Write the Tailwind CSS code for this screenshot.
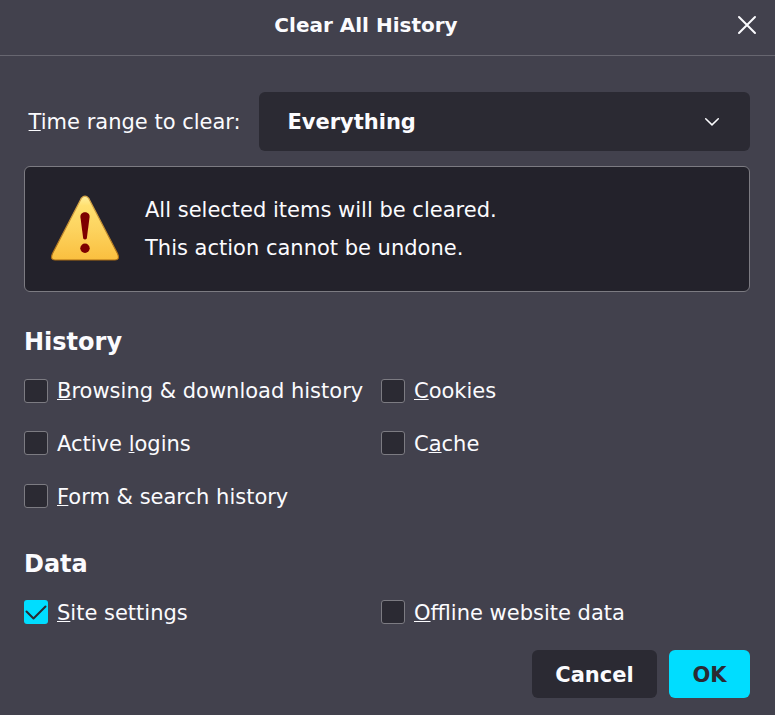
<!DOCTYPE html>
<html lang="en">
<head>
<meta charset="utf-8">
<title>Clear All History</title>
<script src="https://cdn.jsdelivr.net/npm/@tailwindcss/browser@4"></script>
</head>
<body class="flex h-[715px] w-[775px] flex-col overflow-hidden bg-[#42414d] font-['DejaVu_Sans',sans-serif] text-[21px] leading-[26px] whitespace-nowrap text-[#fbfbfe]">
<header class="grid h-14 shrink-0 grid-cols-[43px_1fr_43px] items-center border-b border-[#676670] pb-1">
  <h1 class="col-start-2 -ml-[43px] pb-[2px] text-center text-[20px] font-bold">Clear All History</h1>
  <svg class="mt-[-1px] ml-[5px] size-5" viewBox="0 0 20 20" fill="none" stroke="#fbfbfe" stroke-width="2" stroke-linecap="round"><path d="M2 2 18 18M18 2 2 18"/></svg>
</header>
<main class="flex flex-col px-6 pt-9">
  <div class="flex h-[59px] items-center">
    <label class="w-[235px] pl-[4.6px]"><u class="decoration-1 underline-offset-1">T</u>ime range to clear:</label>
    <div class="flex h-full w-[491px] items-center justify-between rounded-[6px] bg-[#2b2a33] pr-[30px] pl-[28.4px] font-bold">
      <span>Everything</span>
      <svg class="h-4 w-4" viewBox="0 0 16 16" fill="none" stroke="#fbfbfe" stroke-width="1.5" stroke-linecap="round" stroke-linejoin="round"><path d="m1.7 4.7 6.3 6.2L14.3 4.7"/></svg>
    </div>
  </div>
  <div class="mt-[15px] flex h-[126px] w-[726px] items-center rounded-[6px] border border-[#7c7b82] bg-[#23222b] pl-[25px]">
    <svg class="h-[68px] w-[70px]" viewBox="0 0 70 68">
      <defs>
        <linearGradient id="amber" x1="0" y1="0" x2="0" y2="1"><stop offset="0" stop-color="#fff0a0"/><stop offset=".15" stop-color="#ffe070"/><stop offset=".5" stop-color="#fdd460"/><stop offset="1" stop-color="#fabf3f"/></linearGradient>
        <linearGradient id="edge" x1="0" y1="0" x2="0" y2="1"><stop offset="0" stop-color="#d9a94a"/><stop offset="1" stop-color="#a86a12"/></linearGradient>
      </defs>
      <path d="M31.4 3.2Q35-.8 38.6 3.2L67.5 58.5Q70.3 65 65 65H5Q-.3 65 2.5 58.5Z" fill="url(#amber)" stroke="url(#edge)" stroke-width="1.2"/>
      <path d="M30.4 22C30 15.700 40 15.700 39.600 22L36.800 43.500Q35 45.500 33.200 43.500Z" fill="#7d0000"/>
      <circle cx="35" cy="53.3" r="4.7" fill="#7d0000"/>
    </svg>
    <div class="ml-[25px] leading-[38px]"><p>All selected items will be cleared.</p><p>This action cannot be undone.</p></div>
  </div>
  <section class="mt-[34px]">
    <h2 class="h-8 text-[24px] leading-8 font-bold">History</h2>
    <div class="mt-[21px] grid grid-cols-[357px_1fr] grid-rows-[52px_53px_24px]">
      <label class="flex h-6 items-center gap-[9px]"><span class="size-6 rounded-[3px] border border-[#7c7b82] bg-[#2b2a33]"></span><span><u class="decoration-1 underline-offset-1">B</u>rowsing &amp; download history</span></label>
      <label class="flex h-6 items-center gap-[9px]"><span class="size-6 rounded-[3px] border border-[#7c7b82] bg-[#2b2a33]"></span><span><u class="decoration-1 underline-offset-1">C</u>ookies</span></label>
      <label class="flex h-6 items-center gap-[9px]"><span class="size-6 rounded-[3px] border border-[#7c7b82] bg-[#2b2a33]"></span><span class="pt-[2px]">Active <u class="decoration-1 underline-offset-1">l</u>ogins</span></label>
      <label class="flex h-6 items-center gap-[9px]"><span class="size-6 rounded-[3px] border border-[#7c7b82] bg-[#2b2a33]"></span><span class="pt-[2px]">C<u class="decoration-1 underline-offset-1">a</u>che</span></label>
      <label class="flex h-6 items-center gap-[9px]"><span class="size-6 rounded-[3px] border border-[#7c7b82] bg-[#2b2a33]"></span><span class="pt-[2px]"><u class="decoration-1 underline-offset-1">F</u>orm &amp; search history</span></label>
    </div>
  </section>
  <section class="mt-10">
    <h2 class="h-8 text-[24px] leading-8 font-bold">Data</h2>
    <div class="mt-5 grid grid-cols-[357px_1fr]">
      <label class="flex h-6 items-center gap-[9px]"><span class="size-6 rounded-[3px] bg-[#00ddff]"><svg viewBox="0 0 24 24" fill="none" stroke="#2b2a33" stroke-width="2" stroke-linecap="round" stroke-linejoin="round"><path d="m2.500 11.500 7 7L21.500 6.500"/></svg></span><span class="pt-[2px]"><u class="decoration-1 underline-offset-1">S</u>ite settings</span></label>
      <label class="flex h-6 items-center gap-[9px]"><span class="size-6 rounded-[3px] border border-[#7c7b82] bg-[#2b2a33]"></span><span class="pt-[2px]"><u class="decoration-1 underline-offset-1">O</u>ffline website data</span></label>
    </div>
  </section>
  <footer class="mt-[26px] flex justify-end gap-3 pr-[1px] font-bold">
    <button class="h-12 w-[125px] rounded-[6px] bg-[#2b2a33] pt-[2px]">Cancel</button>
    <button class="h-12 w-[81px] rounded-[6px] bg-[#00ddff] pt-[2px] text-[#2b2a33]">OK</button>
  </footer>
</main>
</body>
</html>
